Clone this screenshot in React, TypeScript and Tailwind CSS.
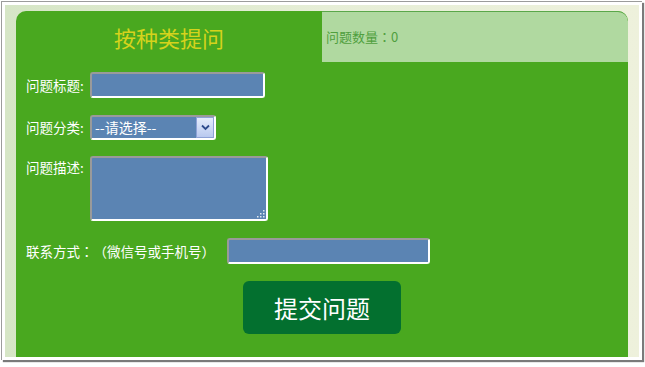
import React from "react";

const font = { fontFamily: '"Noto Sans CJK SC", "Noto Sans", sans-serif' };

// centred full-width colon, as in the reference
function Colon() {
  return <span className="[font-family:'Noto_Sans_CJK_TC',sans-serif]">：</span>;
}

function Field({ w, h }: { w: string; h: string }) {
  return (
    <div
      className={`${w} ${h} bg-[#5b84b3] rounded-[3px] border-2 border-white border-t-[#9a9a9a] border-l-[#9a9a9a]`}
    />
  );
}

export default function App() {
  return (
    <div className="w-[645px] h-[367px] bg-white overflow-hidden [text-spacing-trim:space-all]" style={font}>
      <div className="ml-px mt-px w-[641px] h-[359px] bg-white border-l border-t border-[#9c9c9c] p-[3px] shadow-[2px_2px_1px_#7a7a7a]">
        <div className="h-[352px] pl-[11px] pt-[6px] pr-[10px] bg-gradient-to-r from-[#d6e6c6] via-[#e6eed6] to-[#eef1dc]">
          <div className="w-[612px] h-[346px] bg-[#49a81f] rounded-t-[10px] overflow-hidden">
            <div className="flex h-[51px]">
              <div className="w-[306px] flex items-center justify-center text-[22px] text-[#d5d31c] leading-none">
                按种类提问
              </div>
              <div className="flex-1 flex items-center pl-1 bg-[#b0d9a0] rounded-tr-[10px] border-t border-[#5aa74a] text-[13px] text-[#4f9f3e]">
                问题数量<Colon />0
              </div>
            </div>

            <div className="px-[10px] text-[13.5px] text-white">
              <div className="flex items-center mt-[10px]">
                <span className="w-[64px]">问题标题:</span>
                <Field w="w-[175px]" h="h-[26px]" />
              </div>

              <div className="flex items-center mt-[17px]">
                <span className="w-[64px]">问题分类:</span>
                <div className="w-[126px] h-[25px] flex bg-[#5b84b3] rounded-[3px] border-2 border-white border-t-[#9a9a9a] border-l-[#9a9a9a]">
                  <span className="flex-1 pl-[3px] text-[14px] leading-[21px] text-white">--请选择--</span>
                  <span className="w-[18px] flex items-center justify-center bg-gradient-to-b from-[#e4ecfb] to-[#b9c9ef] border border-[#8da2d6]">
                    <svg width="9" height="7" viewBox="0 0 9 7">
                      <path d="M1 1.5 L4.5 5 L8 1.5" stroke="#2d4b8c" strokeWidth="1.8" fill="none" />
                    </svg>
                  </span>
                </div>
              </div>

              <div className="flex items-start mt-[16px]">
                <span className="w-[64px] leading-[20px] mt-px">问题描述:</span>
                <div className="relative">
                  <Field w="w-[178px]" h="h-[65px]" />
                  <svg className="absolute right-[3px] bottom-[3px]" width="8" height="8" viewBox="0 0 8 8">
                    <g fill="#e0e8f0">
                      <rect x="6" y="0" width="1.5" height="1.5" />
                      <rect x="3" y="3" width="1.5" height="1.5" />
                      <rect x="6" y="3" width="1.5" height="1.5" />
                      <rect x="0" y="6" width="1.5" height="1.5" />
                      <rect x="3" y="6" width="1.5" height="1.5" />
                      <rect x="6" y="6" width="1.5" height="1.5" />
                    </g>
                  </svg>
                </div>
              </div>

              <div className="flex items-center mt-[17px]">
                <span className="w-[201px] whitespace-nowrap">
                  联系方式<Colon />（微信号或手机号）
                </span>
                <Field w="w-[203px]" h="h-[26px]" />
              </div>

              <div className="flex justify-center mt-[17px]">
                <button className="w-[158px] h-[53px] rounded-[6px] bg-[#03702f] text-white text-[24px] leading-none">
                  提交问题
                </button>
              </div>
            </div>
          </div>
        </div>
      </div>
    </div>
  );
}
